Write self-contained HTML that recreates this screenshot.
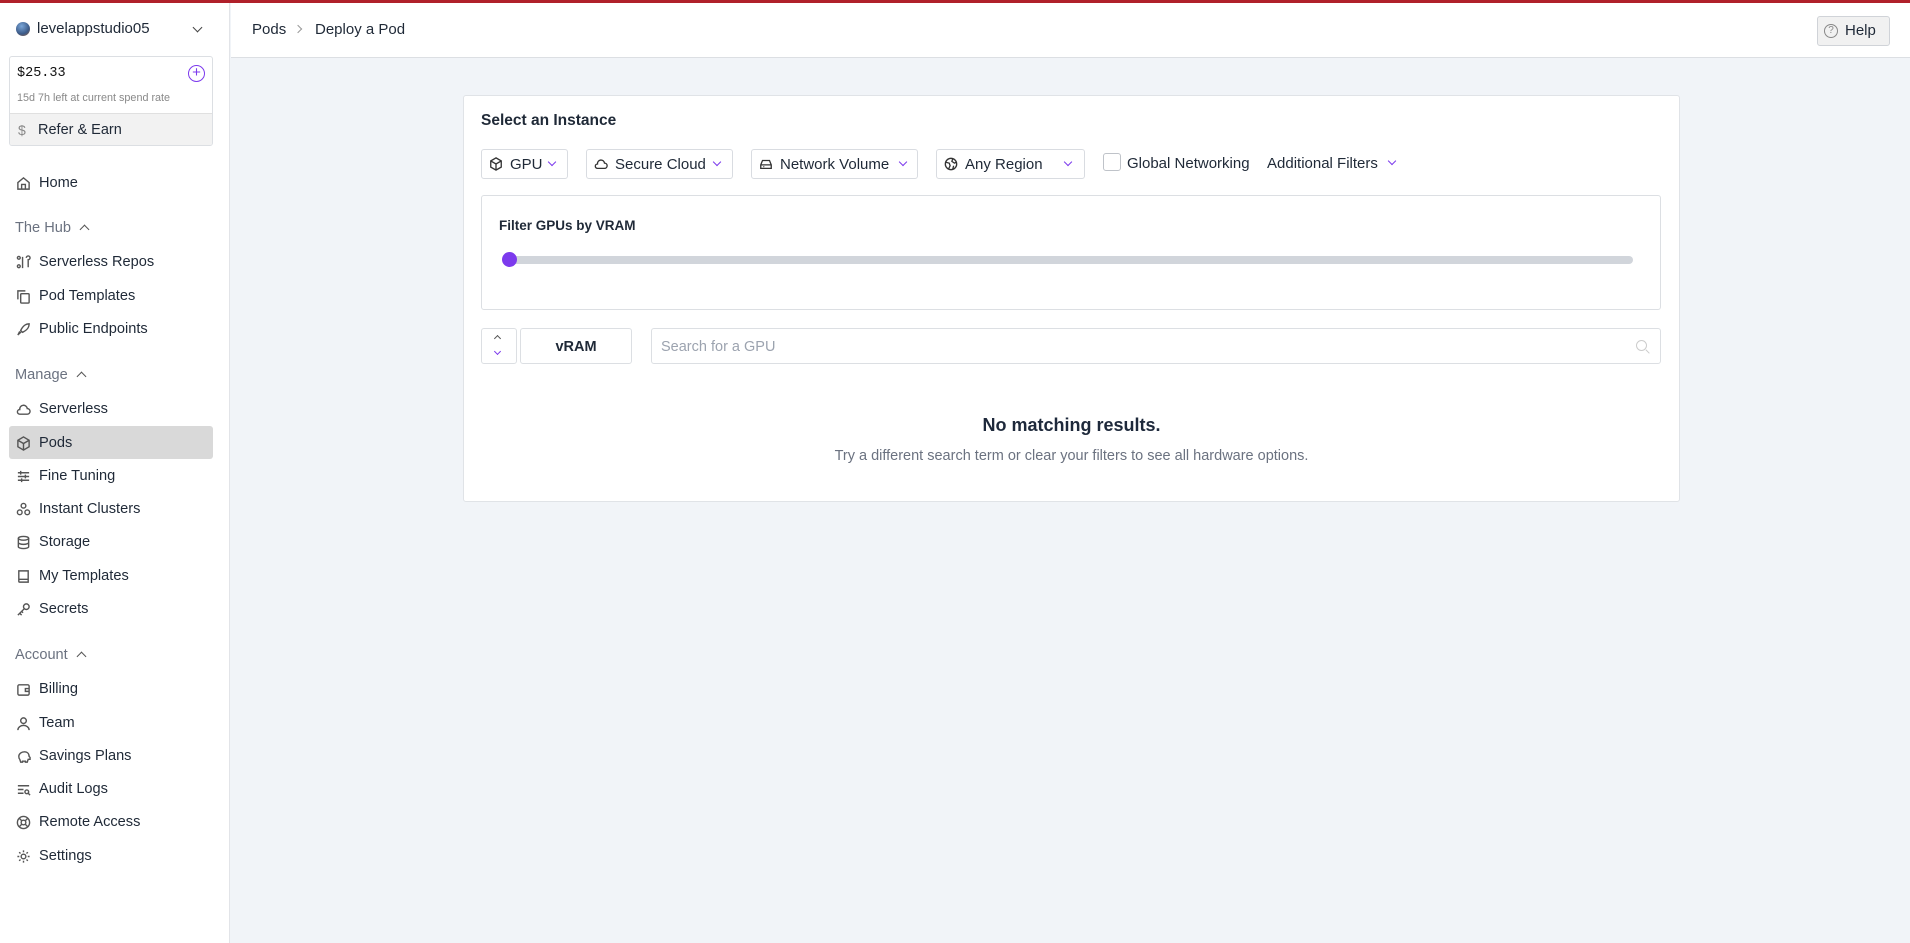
<!DOCTYPE html>
<html><head><meta charset="utf-8"><style>
*{box-sizing:border-box;margin:0;padding:0}
body{width:1910px;height:943px;overflow:hidden;font-family:"Liberation Sans",sans-serif;background:#f1f4f8;color:#1f2937;position:relative}
.abs{position:absolute}
#top{left:0;top:0;width:1910px;height:3px;background:#b0202a}
#side{left:0;top:3px;width:230px;height:940px;background:#fff;border-right:1px solid #e2e4e8}
#head{left:231px;top:3px;width:1679px;height:55px;background:#fff;border-bottom:1px solid #dcdfe3}
.it{position:absolute;left:16px;font-size:14.6px;color:#1f2937;display:flex;align-items:center;height:20px}
.it svg{width:15px;height:15px;margin-right:8px;stroke:#555;fill:none;stroke-width:1.5}
.sec{position:absolute;left:15px;font-size:14.6px;color:#6b7280}
.sec:after{content:"";display:inline-block;width:6px;height:6px;border-left:1.5px solid #555;border-top:1.5px solid #555;transform:rotate(45deg);margin-left:10px;position:relative;top:1px}
.btn{position:absolute;top:149px;height:30px;border:1px solid #d9dce1;border-radius:3px;background:#fff;font-size:15px;display:flex;align-items:center;padding-left:7px;color:#1f2937}
.btn svg{width:14px;height:14px;stroke:#333;fill:none;stroke-width:1.5;margin-right:7px}
.chev{display:inline-block;width:6px;height:6px;border-right:1.5px solid #7c3aed;border-bottom:1.5px solid #7c3aed;transform:rotate(45deg);position:absolute;top:9px}
</style></head><body>
<div id="top" class="abs"></div>
<div id="side" class="abs"></div>
<div id="head" class="abs"></div>

<div class="abs" style="left:16px;top:22px;width:14px;height:14px;border-radius:50%;background:radial-gradient(circle at 40% 30%,#7aa6d8,#3b5a88 60%,#a0643a)"></div>
<div class="abs" style="left:37px;top:20px;font-size:15px;color:#1f2937">levelappstudio05</div>
<div class="abs" style="left:194px;top:24px;width:7px;height:7px;border-right:1.5px solid #444;border-bottom:1.5px solid #444;transform:rotate(45deg)"></div>

<div class="abs" style="left:9px;top:56px;width:204px;height:90px;border:1px solid #dcdfe3;border-radius:3px;background:#fff;overflow:hidden">
 <div class="abs" style="left:7px;top:9px;font-family:'Liberation Mono',monospace;font-size:13.5px;color:#111">$25.33</div>
 <div class="abs" style="left:178px;top:8px;width:17px;height:17px;border:1.5px solid #7c3aed;border-radius:50%;color:#7c3aed;font-size:15px;line-height:13px;text-align:center">+</div>
 <div class="abs" style="left:7px;top:35px;font-size:10.8px;color:#888">15d 7h left at current spend rate</div>
 <div class="abs" style="left:0;top:56px;width:204px;height:34px;background:#f2f2f2;border-top:1px solid #e0e0e0"></div>
 <div class="abs" style="left:8px;top:65px;font-size:14px;color:#888">$</div>
 <div class="abs" style="left:28px;top:65px;font-size:14.5px;color:#1f2937">Refer &amp; Earn</div>
</div>

<div class="it" style="top:173px"><svg viewBox="0 0 16 16"><path d="M2 7l6-5 6 5v7H2z M6 14V9h4v5"/></svg>Home</div>
<div class="sec" style="top:220px">The Hub</div>
<div class="it" style="top:252px"><svg viewBox="0 0 16 16"><circle cx="3" cy="3" r="1.5"/><circle cx="3" cy="12" r="1.5"/><path d="M7 2v12M11 3a2 2 0 1 1 2 2v8"/></svg>Serverless Repos</div>
<div class="it" style="top:286px"><svg viewBox="0 0 16 16"><path d="M2 11V2h8"/><rect x="5" y="5" width="9" height="10" rx="1"/></svg>Pod Templates</div>
<div class="it" style="top:319px"><svg viewBox="0 0 16 16"><path d="M3 13l3-3M5 9c3-6 6-7 9-7 0 3-1 6-7 9z M2 14l2-4"/></svg>Public Endpoints</div>
<div class="sec" style="top:367px">Manage</div>
<div class="it" style="top:399px"><svg viewBox="0 0 16 16"><path d="M4 13h8a3 3 0 0 0 0-6 4 4 0 0 0-8 1 2.5 2.5 0 0 0 0 5z"/></svg>Serverless</div>
<div class="abs" style="left:9px;top:426px;width:204px;height:33px;background:#d9d9d9;border-radius:3px"></div>
<div class="it" style="top:433px"><svg viewBox="0 0 16 16"><path d="M8 1l6 3.5v7L8 15l-6-3.5v-7z M2 4.5L8 8l6-3.5M8 8v7"/></svg>Pods</div>
<div class="it" style="top:466px"><svg viewBox="0 0 16 16"><path d="M2 4h12M2 8h12M2 12h12M5 2v4M10 6v4M6 10v4"/></svg>Fine Tuning</div>
<div class="it" style="top:499px"><svg viewBox="0 0 16 16"><circle cx="8" cy="4" r="2.5"/><circle cx="4" cy="11" r="2.5"/><circle cx="12" cy="11" r="2.5"/></svg>Instant Clusters</div>
<div class="it" style="top:532px"><svg viewBox="0 0 16 16"><ellipse cx="8" cy="3.5" rx="5.5" ry="2"/><path d="M2.5 3.5v9c0 1 2.5 2 5.5 2s5.5-1 5.5-2v-9M2.5 8c0 1 2.5 2 5.5 2s5.5-1 5.5-2"/></svg>Storage</div>
<div class="it" style="top:566px"><svg viewBox="0 0 16 16"><path d="M3 2h10v12H4a1 1 0 0 1-1-1zM3 11h10"/></svg>My Templates</div>
<div class="it" style="top:599px"><svg viewBox="0 0 16 16"><circle cx="11" cy="5" r="3"/><path d="M9 7l-7 7M4 12l2 2M6 10l1.5 1.5"/></svg>Secrets</div>
<div class="sec" style="top:647px">Account</div>
<div class="it" style="top:679px"><svg viewBox="0 0 16 16"><rect x="2" y="3" width="12" height="11" rx="1.5"/><path d="M14 7h-4v3h4"/></svg>Billing</div>
<div class="it" style="top:713px"><svg viewBox="0 0 16 16"><circle cx="8" cy="5" r="3"/><path d="M2 15c0-3 3-5 6-5s6 2 6 5"/></svg>Team</div>
<div class="it" style="top:746px"><svg viewBox="0 0 16 16"><path d="M3 8c0-3 3-5 6-5 3 0 5 2 5 5l1 1v2h-2l-1 3h-2v-1H7v1H5l-1-3c-1-1-1-2-1-3z"/></svg>Savings Plans</div>
<div class="it" style="top:779px"><svg viewBox="0 0 16 16"><path d="M2 4h12M2 8h6M2 12h6"/><circle cx="11.5" cy="10.5" r="2"/><path d="M13 12l2 2"/></svg>Audit Logs</div>
<div class="it" style="top:812px"><svg viewBox="0 0 16 16"><circle cx="8" cy="8" r="6.5"/><circle cx="8" cy="8" r="2.5"/><path d="M3.5 3.5l3 3M12.5 3.5l-3 3M3.5 12.5l3-3M12.5 12.5l-3-3"/></svg>Remote Access</div>
<div class="it" style="top:846px"><svg viewBox="0 0 16 16"><circle cx="8" cy="8" r="2.5"/><path d="M8 1.5v2M8 12.5v2M1.5 8h2M12.5 8h2M3.4 3.4l1.4 1.4M11.2 11.2l1.4 1.4M3.4 12.6l1.4-1.4M11.2 4.8l1.4-1.4"/></svg>Settings</div>

<div class="abs" style="left:252px;top:21px;font-size:15px;color:#1f2937">Pods</div>
<div class="abs" style="left:295px;top:26px;width:6px;height:6px;border-right:1.2px solid #999;border-top:1.2px solid #999;transform:rotate(45deg)"></div>
<div class="abs" style="left:315px;top:21px;font-size:15px;color:#1f2937">Deploy a Pod</div>
<div class="abs" style="left:1817px;top:16px;width:73px;height:30px;border:1px solid #d0d3d8;border-radius:3px;background:#f1f1f1"></div>
<div class="abs" style="left:1824px;top:24px;width:14px;height:14px;border:1.3px solid #888;border-radius:50%;font-size:10px;line-height:12px;text-align:center;color:#888">?</div>
<div class="abs" style="left:1845px;top:22px;font-size:15px;color:#1f2937">Help</div>

<div class="abs" style="left:463px;top:95px;width:1217px;height:407px;background:#fff;border:1px solid #e0e3e7;border-radius:3px"></div>
<div class="abs" style="left:481px;top:112px;font-size:15.5px;font-weight:bold;color:#1f2937">Select an Instance</div>

<div class="btn" style="left:481px;width:87px"><svg viewBox="0 0 16 16"><path d="M8 1l6 3.5v7L8 15l-6-3.5v-7z M2 4.5L8 8l6-3.5M8 8v7"/></svg>GPU<span class="chev" style="left:67px"></span></div>
<div class="btn" style="left:586px;width:147px"><svg viewBox="0 0 16 16"><path d="M4 13h8a3 3 0 0 0 0-6 4 4 0 0 0-8 1 2.5 2.5 0 0 0 0 5z"/></svg>Secure Cloud<span class="chev" style="left:127px"></span></div>
<div class="btn" style="left:751px;width:167px"><svg viewBox="0 0 16 16"><path d="M2 9l2-5h8l2 5v4H2z M2 9h12M5 11h1"/></svg>Network Volume<span class="chev" style="left:148px"></span></div>
<div class="btn" style="left:936px;width:149px"><svg viewBox="0 0 16 16"><circle cx="8" cy="8" r="6.5"/><path d="M2 6l4 1 1 3-2 4M10 2l-1 3 3 2 2-1M10 14l1-4"/></svg>Any Region<span class="chev" style="left:128px"></span></div>
<div class="abs" style="left:1103px;top:153px;width:18px;height:18px;border:1px solid #bfc3c9;border-radius:3px;background:#fff"></div>
<div class="abs" style="left:1127px;top:155px;font-size:15px;color:#1f2937">Global Networking</div>
<div class="abs" style="left:1267px;top:155px;font-size:15px;color:#1f2937">Additional Filters</div>
<span class="chev" style="left:1389px;top:158px"></span>

<div class="abs" style="left:481px;top:195px;width:1180px;height:115px;border:1px solid #dcdfe3;border-radius:3px"></div>
<div class="abs" style="left:499px;top:218px;font-size:13.5px;font-weight:bold;color:#1f2937">Filter GPUs by VRAM</div>
<div class="abs" style="left:503px;top:256px;width:1130px;height:8px;background:#d1d5db;border-radius:4px"></div>
<div class="abs" style="left:502px;top:252px;width:15px;height:15px;background:#7c3aed;border-radius:50%"></div>

<div class="abs" style="left:481px;top:328px;width:36px;height:36px;border:1px solid #dcdfe3;border-radius:3px"></div>
<div class="abs" style="left:495px;top:336px;width:5px;height:5px;border-left:1.3px solid #555;border-top:1.3px solid #555;transform:rotate(45deg)"></div>
<div class="abs" style="left:495px;top:349px;width:5px;height:5px;border-right:1.3px solid #7c3aed;border-bottom:1.3px solid #7c3aed;transform:rotate(45deg)"></div>
<div class="abs" style="left:520px;top:328px;width:112px;height:36px;border:1px solid #dcdfe3;border-radius:3px;font-size:14.5px;font-weight:bold;text-align:center;line-height:36px;color:#1f2937">vRAM</div>
<div class="abs" style="left:651px;top:328px;width:1010px;height:36px;border:1px solid #dcdfe3;border-radius:3px"></div>
<div class="abs" style="left:661px;top:339px;font-size:14.5px;color:#9ca3af">Search for a GPU</div>
<div class="abs" style="left:1636px;top:340px;width:11px;height:11px;border:1.3px solid #ccc;border-radius:50%"></div>
<div class="abs" style="left:1645px;top:351px;width:5px;height:1.3px;background:#ccc;transform:rotate(45deg)"></div>

<div class="abs" style="left:463px;top:415px;width:1217px;text-align:center;font-size:18px;font-weight:bold;color:#1e293b">No matching results.</div>
<div class="abs" style="left:463px;top:448px;width:1217px;text-align:center;font-size:14.5px;color:#6b7280">Try a different search term or clear your filters to see all hardware options.</div>
</body></html>
